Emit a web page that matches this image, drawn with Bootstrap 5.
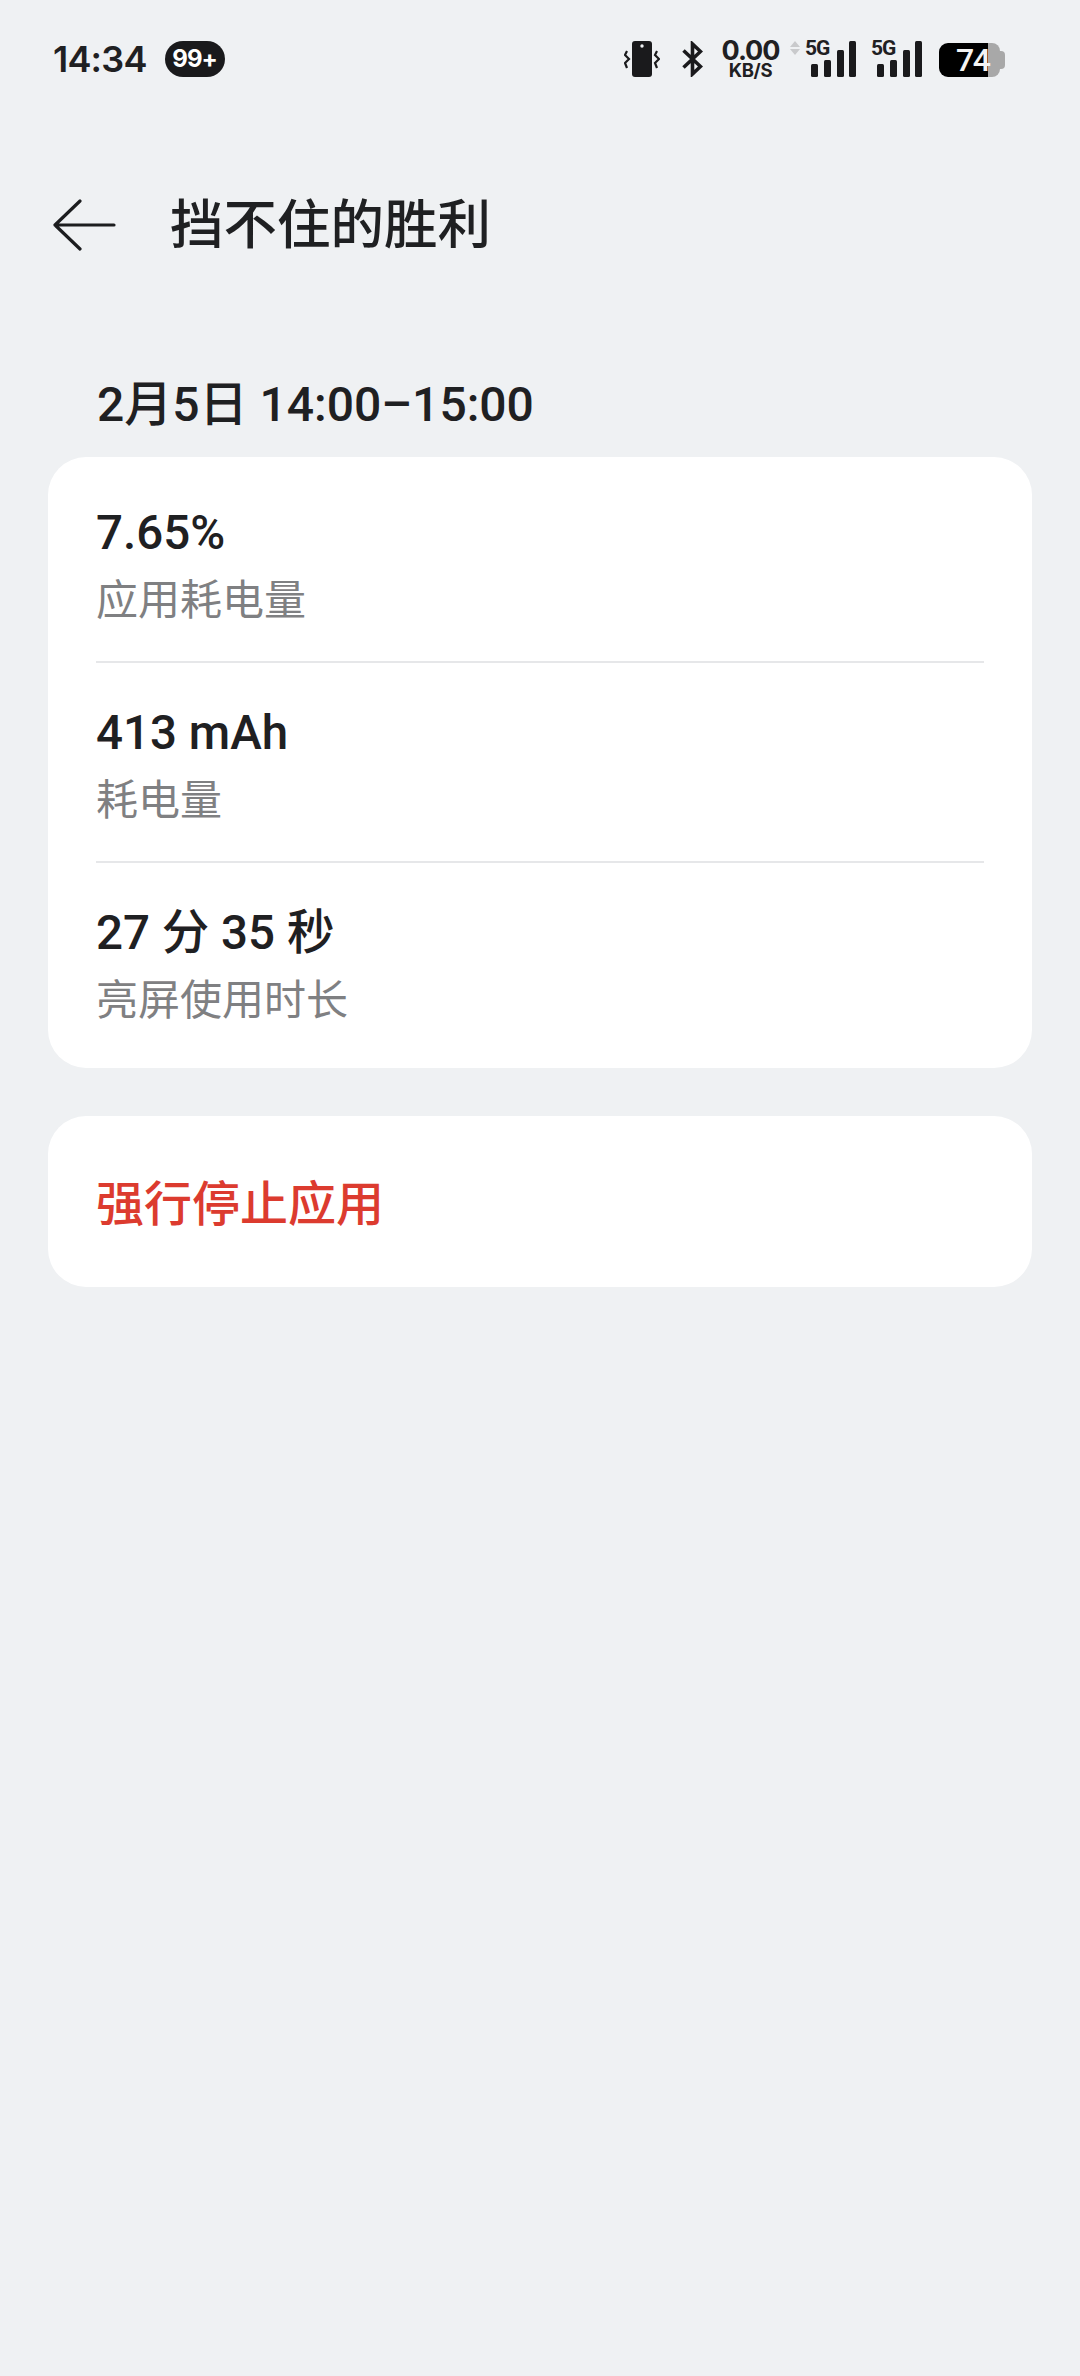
<!DOCTYPE html>
<html lang="zh-CN">
<head>
  <meta charset="UTF-8" />
  <meta name="viewport" content="width=device-width, initial-scale=1" />
  <title>挡不住的胜利</title>
  <link href="https://cdn.jsdelivr.net/npm/bootstrap@5.3.0/dist/css/bootstrap.min.css" rel="stylesheet" />
  <style>
    html, body { height: 100%; }
    body { background: #eff1f3; color: #1f2022; font-family: Roboto, "Noto Sans CJK SC", sans-serif; overflow: hidden; }
    .status-bar { height: 118px; padding-left: 53px; font-family: Inter, Roboto, sans-serif; }
    .clock { font-size: 36px; font-weight: 600; letter-spacing: -0.8px; line-height: 1; }
    .notif-pill { width: 60px; height: 36px; margin-left: 18px; border-radius: 18px; background: #1a1a1c; color: #fff; font-size: 24px; font-weight: 700; letter-spacing: -1px; }
    .status-icons { margin-right: 80px; height: 36px; }
    .bt-icon { margin-left: 22px; }
    .net-speed { width: 59px; margin: 0 10px 0 18px; text-align: center; line-height: 1; }
    .net-speed b { display: block; font-weight: 700; font-size: 27px; height: 22px; line-height: 20px; letter-spacing: -1px; }
    .net-speed span { display: block; font-weight: 700; font-size: 18.5px; height: 14px; line-height: 14px; letter-spacing: -0.3px; }
    .updown { margin-right: 5px; }
    .sig-wrap { position: relative; width: 52px; height: 36px; }
    .sig-wrap + .sig-wrap { margin-left: 14px; }
    .sig-label { position: absolute; left: 0; top: -3px; font-family: Roboto, sans-serif; font-size: 21px; font-weight: 700; line-height: 1; letter-spacing: -1px; }
    .batt { position: relative; width: 61px; height: 34px; margin-left: 16px; border-radius: 9px 8px 8px 9px; background: linear-gradient(90deg, #000 49px, #a8a8a8 49px); color: #f4f4f4; }
    .batt::after { content: ""; position: absolute; right: -5px; top: 8px; width: 5px; height: 18px; border-radius: 0 4px 4px 0; background: #a8a8a8; }
    .batt span { display: block; font-family: Roboto, sans-serif; font-size: 32px; font-weight: 500; letter-spacing: -1.5px; margin-left: 17px; line-height: 34px; }
    .app-header { height: 106px; margin-top: 54px; padding-left: 53px; }
    .app-title { margin: 2px 0 0 52px; font-size: 53.5px; font-weight: 500; line-height: 1; }
    .section-date { margin: 102px 0 28px; padding-left: 97px; height: 49px; font-size: 48px; font-weight: 500; line-height: 49px; }
    .panel { margin: 0 48px; background: #fff; border-radius: 38px; }
    .info-row { padding: 0 48px; }
    .info-inner { height: 200px; border-bottom: 2px solid #e6e7e9; padding-top: 40px; }
    .info-row:first-child .info-inner { height: 206px; padding-top: 46px; }
    .info-row:last-child .info-inner { border-bottom: 0; height: 205px; }
    .info-value { font-size: 47.5px; font-weight: 500; line-height: 60px; }
    .info-label { font-size: 42px; line-height: 60px; color: #7f8082; margin-top: 8px; }
    .stop-panel { margin-top: 48px; height: 171px; padding: 6px 0 0 48px; color: #dc3b2f; font-size: 48px; font-weight: 500; }
  </style>
</head>
<body>
  <div class="status-bar d-flex align-items-center">
    <div class="clock">14:34</div>
    <div class="notif-pill d-flex align-items-center justify-content-center">99+</div>
    <div class="status-icons d-flex align-items-end ms-auto">
      <!-- vibrate -->
      <svg width="36" height="36" viewBox="0 0 36 36">
        <rect x="8" y="0" width="20" height="36" rx="3" fill="#1a1a1c"/>
        <circle cx="18" cy="5" r="1.7" fill="#eff1f3"/>
        <path d="M3 10 L1 14 L5 18 L1 22 L3 27 M33 10 L31 14 L35 18 L31 22 L33 27" fill="none" stroke="#1a1a1c" stroke-width="2.2"/>
      </svg>
      <!-- bluetooth -->
      <svg class="bt-icon" width="21" height="36" viewBox="0 0 21 36">
        <path d="M1.5 9.5 L18.5 25.5 L10.5 33 V3 L18.5 10.5 L1.5 26.5" fill="none" stroke="#1a1a1c" stroke-width="3.6"/>
      </svg>
      <div class="net-speed"><b>0.00</b><span>KB/S</span></div>
      <svg class="updown align-self-start" width="10" height="14" viewBox="0 0 10 14">
        <path d="M5 0 L10 6 H0 Z M5 14 L10 8 H0 Z" fill="#c9cacc"/>
      </svg>
      <div class="sig-wrap">
        <span class="sig-label">5G</span>
        <svg class="d-block" width="52" height="36" viewBox="0 0 52 36">
          <rect x="6" y="23" width="7" height="13" rx="1.5" fill="#1a1a1c"/>
          <rect x="19" y="19" width="7" height="17" rx="1.5" fill="#1a1a1c"/>
          <rect x="32" y="9" width="7" height="27" rx="1.5" fill="#1a1a1c"/>
          <rect x="44" y="0" width="7" height="36" rx="1.5" fill="#1a1a1c"/>
        </svg>
      </div>
      <div class="sig-wrap">
        <span class="sig-label">5G</span>
        <svg class="d-block" width="52" height="36" viewBox="0 0 52 36">
          <rect x="6" y="23" width="7" height="13" rx="1.5" fill="#1a1a1c"/>
          <rect x="19" y="19" width="7" height="17" rx="1.5" fill="#1a1a1c"/>
          <rect x="32" y="9" width="7" height="27" rx="1.5" fill="#1a1a1c"/>
          <rect x="44" y="0" width="7" height="36" rx="1.5" fill="#1a1a1c"/>
        </svg>
      </div>
      <div class="batt"><span>74</span></div>
    </div>
  </div>

  <div class="app-header d-flex align-items-center">
    <svg width="65" height="52" viewBox="0 0 65 52">
      <path d="M27 2 L2 26 L27 50 M2 26 H61" fill="none" stroke="#1c1d1f" stroke-width="3.2" stroke-linecap="round" stroke-linejoin="round"/>
    </svg>
    <h1 class="app-title">挡不住的胜利</h1>
  </div>

  <h2 class="section-date">2月5日 14:00–15:00</h2>

  <div class="panel overflow-hidden">
    <div class="info-row"><div class="info-inner"><div class="info-value">7.65%</div><div class="info-label">应用耗电量</div></div></div>
    <div class="info-row"><div class="info-inner"><div class="info-value">413 mAh</div><div class="info-label">耗电量</div></div></div>
    <div class="info-row"><div class="info-inner"><div class="info-value">27 分 35 秒</div><div class="info-label">亮屏使用时长</div></div></div>
  </div>

  <div class="panel stop-panel d-flex align-items-center">强行停止应用</div>

  <script src="https://cdn.jsdelivr.net/npm/bootstrap@5.3.0/dist/js/bootstrap.bundle.min.js"></script>
</body>
</html>
